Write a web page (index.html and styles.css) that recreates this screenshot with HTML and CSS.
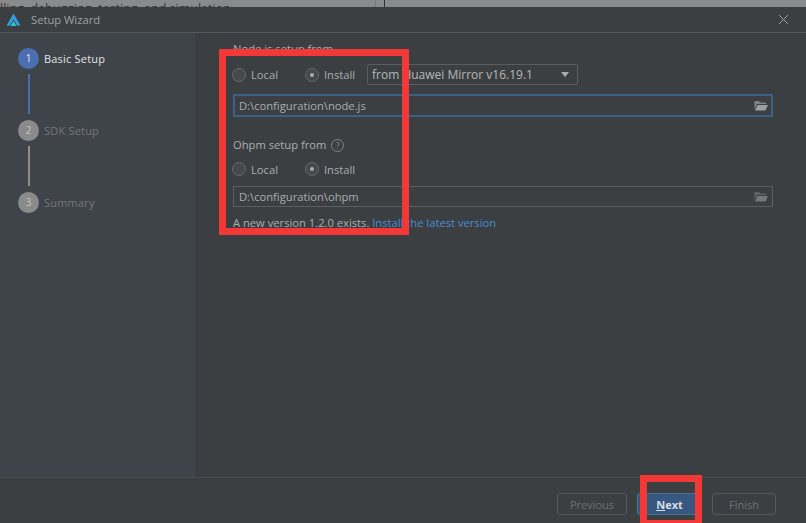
FILE: index.html
```html
<!DOCTYPE html>
<html lang="en">
<head>
    <meta charset="UTF-8">
    <meta name="viewport" content="width=device-width, initial-scale=1.0">
    <title>Setup Wizard</title>
    <link rel="stylesheet" href="styles.css">
</head>
<body>
    <div class="behind">
        <span class="behind-text">lling, debugging, testing, and simulation</span>
        <span class="behind-rule"></span>
    </div>
    <div class="dialog">
        <div class="titlebar">
            <svg class="logo" width="15" height="14" viewBox="0 0 15 14">
                <path d="M7.5 0.5 L14.5 12.5 L11 12.5 L7.5 6.5 L4 12.5 L0.5 12.5 Z" fill="#2f9fe0"/>
                <path d="M7.5 8 L10.5 13 L4.5 13 Z" fill="#2dc5c5"/>
            </svg>
            <span class="title">Setup Wizard</span>
            <svg class="close" width="11" height="11" viewBox="0 0 11 11">
                <path d="M1 1 L10 10 M10 1 L1 10" stroke="#a0a3a5" stroke-width="1" fill="none"/>
            </svg>
        </div>
        <div class="body">
            <div class="sidebar">
                <div class="step active">
                    <span class="step-num">1</span>
                    <span class="step-name">Basic Setup</span>
                </div>
                <div class="step-line active"></div>
                <div class="step">
                    <span class="step-num">2</span>
                    <span class="step-name">SDK Setup</span>
                </div>
                <div class="step-line"></div>
                <div class="step">
                    <span class="step-num">3</span>
                    <span class="step-name">Summary</span>
                </div>
            </div>
            <div class="main">
                <div class="label">Node.js setup from</div>
                <div class="radio-row">
                    <div class="radio-opt local"><span class="radio"></span>Local</div>
                    <div class="radio-opt install"><span class="radio on"></span>Install</div>
                    <div class="select">
                        <span>from Huawei Mirror v16.19.1</span>
                        <span class="arrow"></span>
                    </div>
                </div>
                <div class="field focus">
                    <span>D:\configuration\node.js</span>
                    <svg class="folder" width="14" height="11" viewBox="0 0 14 11">
                        <path d="M0.5 1 H5 L6.5 2.5 H12 V4 H3 L0.5 10 Z" fill="#7d8285"/>
                        <path d="M3.5 5 H14 L11.5 10.5 H1 Z" fill="#9a9fa2"/>
                    </svg>
                </div>
                <div class="label second">Ohpm setup from <span class="help">?</span></div>
                <div class="radio-row second">
                    <div class="radio-opt local"><span class="radio"></span>Local</div>
                    <div class="radio-opt install"><span class="radio on"></span>Install</div>
                </div>
                <div class="field">
                    <span>D:\configuration\ohpm</span>
                    <svg class="folder" width="14" height="11" viewBox="0 0 14 11">
                        <path d="M0.5 1 H5 L6.5 2.5 H12 V4 H3 L0.5 10 Z" fill="#5f6366"/>
                        <path d="M3.5 5 H14 L11.5 10.5 H1 Z" fill="#74787b"/>
                    </svg>
                </div>
                <div class="version">A new version 1.2.0 exists. <a class="link">Install the latest version</a></div>
            </div>
        </div>
        <div class="footer">
            <button class="btn prev">Previous</button>
            <button class="btn primary"><u>N</u>ext</button>
            <button class="btn finish">Finish</button>
        </div>
    </div>
    <div class="mark mark-form"></div>
    <div class="mark mark-next"></div>
</body>
</html>
```

FILE: styles.css
```css
html, body { margin: 0; padding: 0; }
body { width: 806px; height: 523px; overflow: hidden; position: relative; background: #3c3f41; font-family: "Open Sans", "Noto Sans", sans-serif; font-size: 11.2px; color: #a9adb0; }

.behind { height: 7px; background: #8a8a8a; position: relative; overflow: hidden; }
.behind-text { position: absolute; left: 0; top: 1px; color: #333; font-size: 12.5px; line-height: 16px; white-space: nowrap; }
.behind-rule { position: absolute; left: 375px; top: 0; width: 10px; height: 7px; box-sizing: border-box; border-left: 1px solid #777; border-right: 1px solid #333; }

.dialog { height: 516px; display: flex; flex-direction: column; }
.titlebar { height: 26px; box-sizing: border-box; flex: none; display: flex; align-items: center; padding: 0 17px 0 6px; border-bottom: 1px solid #55585a; }
.logo { margin-right: 10px; }
.title { color: #9da1a4; font-size: 11.2px; flex: 1; }

.body { flex: 1; display: flex; min-height: 0; }
.sidebar { width: 195px; flex: none; background: #3f434a; padding-top: 14px; box-sizing: border-box; }
.step { display: flex; align-items: center; height: 22px; padding-left: 18px; }
.step-num { width: 21px; height: 21px; border-radius: 50%; background: #8a8a8a; color: #c5c5c5; font-size: 10px; display: flex; align-items: center; justify-content: center; margin-right: 5px; }
.step-name { color: #74787d; font-size: 11px; letter-spacing: 0.2px; }
.step.active .step-num { background: #4a6eb0; color: #e6e9ee; }
.step.active .step-name { color: #e2e4e6; }
.step-line { width: 2px; height: 40px; margin: 5px 0 5px 28px; background: #8f8f8f; }
.step-line.active { background: #4a6eb0; }

.main { flex: 1; padding: 7px 33px 0 38px; }
.label { height: 18px; line-height: 18px; }
.label.second { margin-top: 19px; display: flex; align-items: center; gap: 5px; }
.help { width: 11px; height: 11px; border: 1px solid #808487; border-radius: 50%; color: #808487; font-size: 9px; line-height: 11px; text-align: center; }

.radio-row { display: flex; align-items: center; height: 21px; margin-top: 6px; }
.radio-row.second { height: 20px; margin-top: 5px; }
.radio-opt { display: flex; align-items: center; }
.radio-opt.local { width: 73px; margin-left: -1px; }
.radio-opt.install { width: 62px; }
.radio { width: 12px; height: 12px; border: 1px solid #666a6c; border-radius: 50%; background: #45494b; margin-right: 5px; position: relative; }
.radio.on::after { content: ""; position: absolute; left: 4px; top: 4px; width: 4px; height: 4px; border-radius: 50%; background: #a9adb0; }
.select { width: 211px; height: 21px; box-sizing: border-box; border: 1px solid #5b5e60; border-radius: 2px; display: flex; align-items: center; justify-content: space-between; padding: 0 8px 0 4px; color: #b4b7ba; font-size: 12px; }
.arrow { width: 0; height: 0; border-left: 4px solid transparent; border-right: 4px solid transparent; border-top: 5px solid #a9adb0; }

.field { height: 21px; margin-top: 7px; box-sizing: border-box; border: 1px solid #5b5e60; display: flex; align-items: center; justify-content: space-between; padding: 0 4px 0 5px; }
.field.focus { height: 23px; margin-top: 9px; border: 2px solid #3d6185; padding-left: 4px; padding-right: 3px; }

.version { margin-top: 7px; height: 18px; line-height: 18px; }
.link { color: #4a8bd6; }

.footer { height: 46px; flex: none; box-sizing: border-box; border-top: 1px solid #4b4e50; display: flex; justify-content: flex-end; align-items: flex-start; gap: 10px; padding: 15px 30px 0 0; }
.btn { height: 22px; box-sizing: border-box; font: 11px "Open Sans", "Noto Sans", sans-serif; background: transparent; color: #6c7073; border: 1px solid #55585a; border-radius: 3px; padding: 0; }
.btn.prev { width: 70px; }
.btn.finish { width: 64px; }
.btn.primary { background: #365880; border-color: #4c708c; color: #d5dbe1; font-weight: 700; width: 65px; }

.mark { position: absolute; box-sizing: border-box; border: 7px solid #f33838; }
.mark-form { left: 219px; top: 49px; width: 190px; height: 186px; }
.mark-next { left: 640px; top: 475px; width: 62px; height: 52px; }
```
